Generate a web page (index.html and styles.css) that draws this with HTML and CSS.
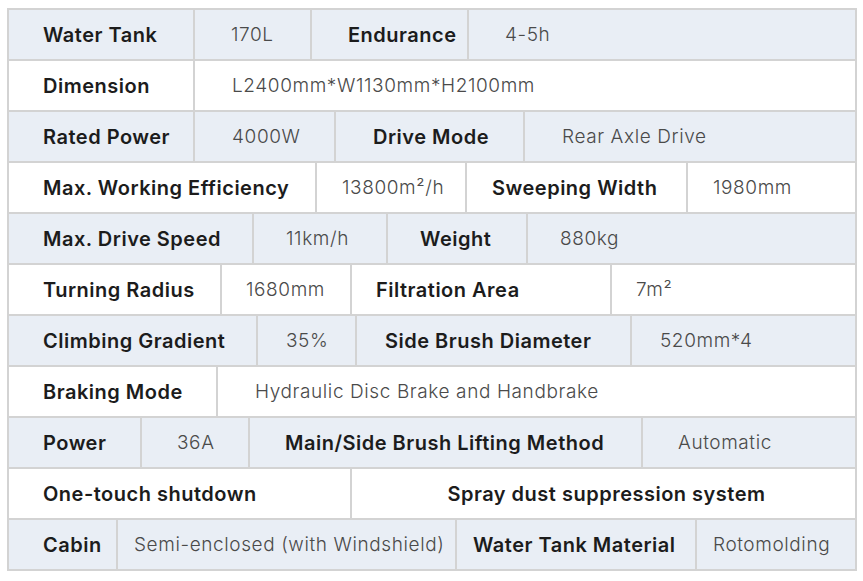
FILE: index.html
```html
<!DOCTYPE html>
<html>
<head>
<meta charset="utf-8">
<link rel="stylesheet" href="styles.css">
</head>
<body>
<div class="spec">
  <div class="row r1 alt">
    <div class="cell k">Water Tank</div><div class="cell v">170L</div><div class="cell k">Endurance</div><div class="cell v">4-5h</div>
  </div>
  <div class="row r2">
    <div class="cell k">Dimension</div><div class="cell v">L2400mm*W1130mm*H2100mm</div>
  </div>
  <div class="row r3 alt">
    <div class="cell k">Rated Power</div><div class="cell v">4000W</div><div class="cell k">Drive Mode</div><div class="cell v">Rear Axle Drive</div>
  </div>
  <div class="row r4">
    <div class="cell k">Max. Working Efficiency</div><div class="cell v">13800m²/h</div><div class="cell k">Sweeping Width</div><div class="cell v">1980mm</div>
  </div>
  <div class="row r5 alt">
    <div class="cell k">Max. Drive Speed</div><div class="cell v">11km/h</div><div class="cell k">Weight</div><div class="cell v">880kg</div>
  </div>
  <div class="row r6">
    <div class="cell k">Turning Radius</div><div class="cell v">1680mm</div><div class="cell k">Filtration Area</div><div class="cell v">7m²</div>
  </div>
  <div class="row r7 alt">
    <div class="cell k">Climbing Gradient</div><div class="cell v">35%</div><div class="cell k">Side Brush Diameter</div><div class="cell v">520mm*4</div>
  </div>
  <div class="row r8">
    <div class="cell k">Braking Mode</div><div class="cell v">Hydraulic Disc Brake and Handbrake</div>
  </div>
  <div class="row r9 alt">
    <div class="cell k">Power</div><div class="cell v">36A</div><div class="cell k">Main/Side Brush Lifting Method</div><div class="cell v">Automatic</div>
  </div>
  <div class="row r10">
    <div class="cell k">One-touch shutdown</div><div class="cell k center">Spray dust suppression system</div>
  </div>
  <div class="row r11 alt">
    <div class="cell k">Cabin</div><div class="cell v">Semi-enclosed (with Windshield)</div><div class="cell k">Water Tank Material</div><div class="cell v">Rotomolding</div>
  </div>
</div>
</body>
</html>
```

FILE: styles.css
```css
* { box-sizing: border-box; }
html, body { margin: 0; padding: 0; background: #ffffff; }
body { padding: 8px 0 0 7px; font-family: Inter, "Noto Sans", sans-serif; }

.spec {
  width: 850px;
  border-top: 2px solid #d3d3d3;
  border-left: 2px solid #d3d3d3;
}

.row {
  display: grid;
  height: 51px;
  background: #ffffff;
}
.row.alt { background: #e9eef5; }

.cell {
  display: flex;
  align-items: center;
  padding-left: var(--pad);
  border-right: 2px solid #d3d3d3;
  border-bottom: 2px solid #d3d3d3;
  white-space: nowrap;
  overflow: hidden;
}
.cell:first-child { padding-left: 34px; }

.k {
  font-size: 20px;
  font-weight: 600;
  color: #1c1c1c;
  letter-spacing: 0.5px;
}
.v {
  font-size: 19px;
  font-weight: 300;
  color: #4a4a4a;
  letter-spacing: 0.6px;
}
.center { justify-content: center; padding-left: 6px; }

.r1 { grid-template-columns: 186px 117px 157px 1fr; --pad: 36px; }
.r2 { grid-template-columns: 186px 1fr; --pad: 37px; }
.r3 { grid-template-columns: 186px 141px 189px 1fr; --pad: 37px; }
.r4 { grid-template-columns: 308px 150px 221px 1fr; --pad: 25px; }
.r5 { grid-template-columns: 245px 134px 140px 1fr; --pad: 32px; }
.r6 { grid-template-columns: 213px 130px 260px 1fr; --pad: 24px; }
.r7 { grid-template-columns: 249px 99px 275px 1fr; --pad: 28px; }
.r8 { grid-template-columns: 209px 1fr; --pad: 37px; }
.r9 { grid-template-columns: 133px 108px 393px 1fr; --pad: 35px; }
.r10 { grid-template-columns: 343px 1fr; --pad: 0px; }
.r11 { grid-template-columns: 109px 339px 240px 1fr; --pad: 16px; }
```
